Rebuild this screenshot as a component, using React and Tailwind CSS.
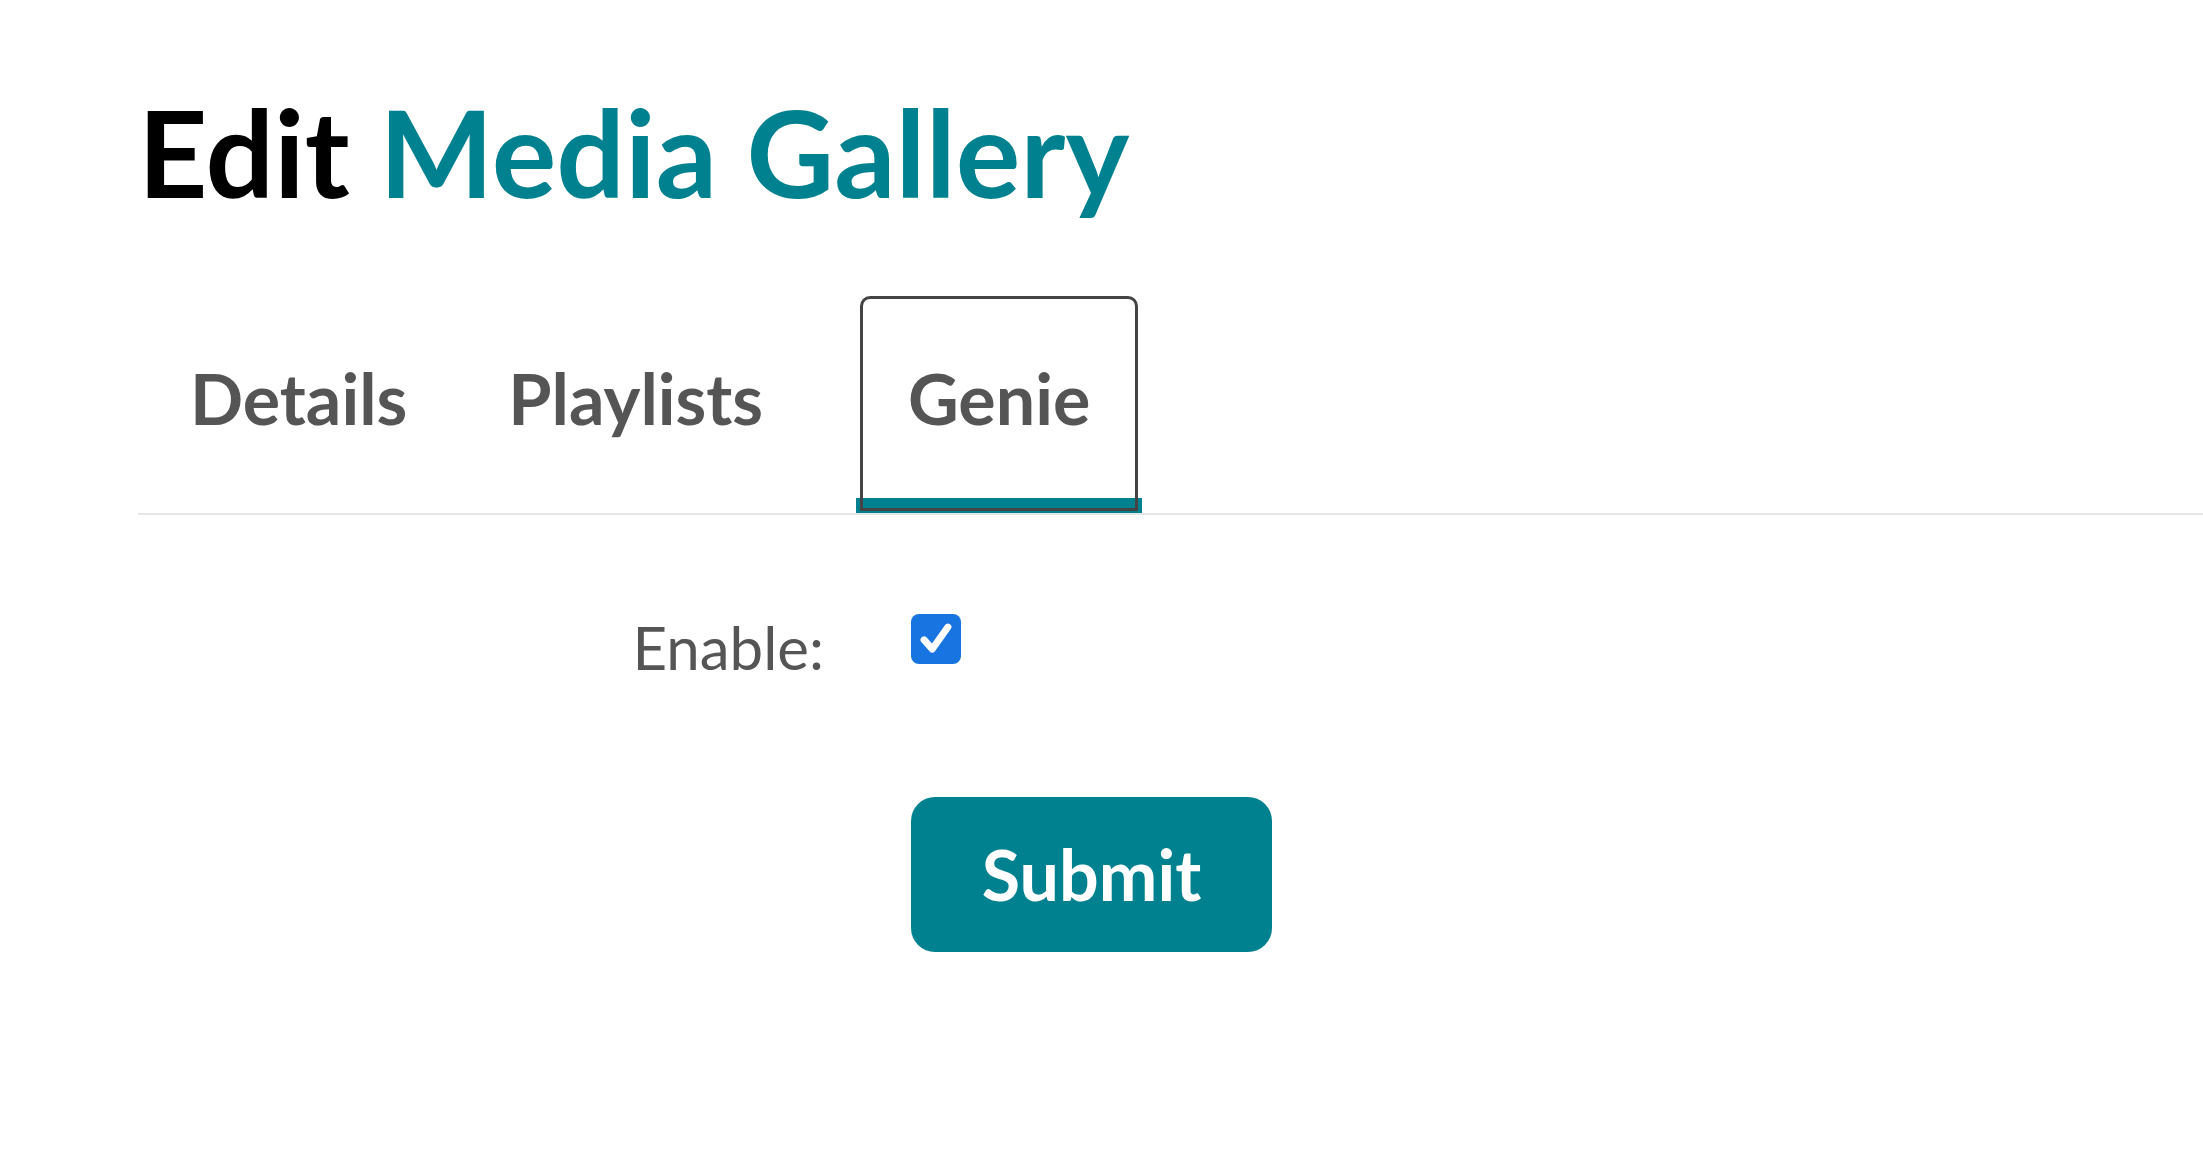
import { useState } from 'react';

function App() {
  const [enabled, setEnabled] = useState(true);

  return (
    <div className="min-h-screen w-full bg-white pl-[138px] pt-[79px]" style={{ fontFamily: 'Lato, "Noto Sans", sans-serif' }}>
      <h1 className="text-[121px] font-bold leading-[1.2] text-black">
        Edit <span className="text-[#00818f]">Media Gallery</span>
      </h1>

      <div className="mt-[72px] flex items-end border-b-2 border-[#e6e6e6]">
        <div className="h-[217px] pl-[52px] pr-[43px] pt-[60px] text-[70px] font-bold leading-[1.2] text-[#555]">Details</div>
        <div className="h-[217px] px-[58px] pt-[60px] text-[70px] font-bold leading-[1.2] text-[#555]">Playlists</div>
        <div className="relative ml-[35px] h-[217px] w-[286px] border-b-[15px] border-[#00818f] pt-[60px] text-center text-[70px] font-bold leading-[1.2] text-[#555]">
          <span className="absolute inset-x-[4px] top-0 -bottom-[13px] rounded-t-[10px] border-[3px] border-[#444]"></span>
          Genie
        </div>
      </div>

      <div className="mt-[96px] flex items-start">
        <label className="w-[686px] text-right text-[60px] leading-[1.2] text-[#555]">Enable:</label>
        <button
          type="button"
          onClick={() => setEnabled(!enabled)}
          className={`ml-[87px] mt-[3px] flex h-[50px] w-[50px] items-center justify-center rounded-[8px] ${enabled ? 'bg-[#1874e0]' : 'border-2 border-[#767676] bg-white'}`}
        >
          {enabled && (
            <svg viewBox="0 0 24 24" className="h-[44px] w-[44px]" fill="none" stroke="white" strokeWidth="3.8" strokeLinecap="round" strokeLinejoin="round">
              <path d="M5.5 12.5l4.5 5L18.5 5.5" />
            </svg>
          )}
        </button>
      </div>

      <div className="mt-[114px] pl-[773px]">
        <button className="h-[155px] w-[361px] rounded-[24px] bg-[#00818f] text-[70px] font-bold text-white">Submit</button>
      </div>
    </div>
  );
}

export default App;
